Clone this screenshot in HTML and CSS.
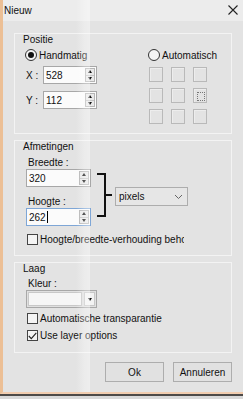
FILE: index.html
```html
<html>
<head>
<title>Nieuw</title>
<link rel="stylesheet" href="styles.css">
</head>
<body>
<div class="frame">
<div class="window">
  <div class="titlebar">
    <span class="title">Nieuw</span>
    <svg class="close" width="10" height="10" viewBox="0 0 10 10"><path d="M0.5 0.5 L9.5 9.5 M9.5 0.5 L0.5 9.5" stroke="#222" stroke-width="1.1" fill="none"/></svg>
  </div>

  <div class="content">
    <!-- Positie -->
    <div class="group positie">
      <div class="group-label">Positie</div>
      <div class="pos-cols">
        <div class="pos-manual">
          <div class="radio-row"><span class="radio checked"></span>Handmatig</div>
          <div class="coord-row">
            <span class="coord-label">X :</span>
            <div class="spin">
              <span class="spin-value">528</span>
              <div class="spin-btns"><span class="up"></span><span class="down"></span></div>
            </div>
          </div>
          <div class="coord-row second">
            <span class="coord-label">Y :</span>
            <div class="spin">
              <span class="spin-value">112</span>
              <div class="spin-btns"><span class="up"></span><span class="down"></span></div>
            </div>
          </div>
        </div>
        <div class="pos-auto">
          <div class="radio-row"><span class="radio"></span>Automatisch</div>
          <div class="anchor-grid">
            <span class="cell"></span><span class="cell"></span><span class="cell"></span>
            <span class="cell"></span><span class="cell"></span><span class="cell selected"></span>
            <span class="cell"></span><span class="cell"></span><span class="cell"></span>
          </div>
        </div>
      </div>
    </div>

    <!-- Afmetingen -->
    <div class="group afmetingen">
      <div class="group-label">Afmetingen</div>
      <div class="size-row">
        <div class="size-fields">
          <div class="field-label">Breedte :</div>
          <div class="spin wide">
            <span class="spin-value">320</span>
            <div class="spin-btns"><span class="up"></span><span class="down"></span></div>
          </div>
          <div class="field-label second">Hoogte :</div>
          <div class="spin wide focused">
            <span class="spin-value">262<span class="caret"></span></span>
            <div class="spin-btns"><span class="up"></span><span class="down"></span></div>
          </div>
        </div>
        <svg class="bracket" width="15" height="44" viewBox="0 0 15 44"><path d="M0 1 H8 V43 H0 M8 22 H15" stroke="#111" stroke-width="2" fill="none"/></svg>
        <div class="unit-select">
          <span>pixels</span>
          <svg width="9" height="6" viewBox="0 0 9 6"><path d="M1 1 L4.5 4.5 L8 1" stroke="#666" stroke-width="1" fill="none"/></svg>
        </div>
      </div>
      <div class="check-row clipped"><span class="check"></span>Hoogte/breedte-verhouding behouden</div>
    </div>

    <!-- Laag -->
    <div class="group laag">
      <div class="group-label">Laag</div>
      <div class="field-label">Kleur :</div>
      <div class="color-combo">
        <span class="color-field"></span>
        <span class="color-btn"><span class="tri"></span></span>
      </div>
      <div class="check-row first"><span class="check"></span>Automatische transparantie</div>
      <div class="check-row"><span class="check on"><svg width="9" height="8" viewBox="0 0 9 8"><path d="M0.8 4 L3.3 6.6 L8.3 0.8" stroke="#222" stroke-width="1.1" fill="none"/></svg></span>Use layer options</div>
    </div>

    <div class="buttons">
      <button class="btn">Ok</button>
      <button class="btn">Annuleren</button>
    </div>
  </div>

  <div class="glare"></div>
</div>
</div>
</body>
</html>
```

FILE: styles.css
```css
* {
  box-sizing: border-box;
}

body {
  margin: 0;
  background: #d9d9d9;
  font-family: "Liberation Sans", Arial, sans-serif;
  font-size: 10px;
  color: #111;
}

.frame {
  width: 243px;
  height: 396px;
  border-bottom: 2px solid #4d4a48;
}

.window {
  position: relative;
  height: 394px;
  background: #e3e3e3;
  border-left: 3px solid #ecbf95;
  border-bottom: 2px solid #f1cdb0;
  overflow: hidden;
}

.titlebar {
  height: 21px;
  background: #ececec;
  display: flex;
  align-items: center;
  justify-content: space-between;
  padding: 0 5px 0 1px;
}

.close {
  margin-top: -1px;
}

.content {
  padding: 12px 11px 0 11px;
}

.group {
  border: 1px solid #f3f3f3;
  padding-left: 8px;
}

.group-label {
  line-height: 12px;
  margin-top: 0;
}

/* Positie */
.positie {
  height: 101px;
}

.pos-cols {
  display: flex;
  padding-left: 2px;
}

.pos-manual {
  width: 123px;
}

.radio-row {
  display: flex;
  align-items: center;
  height: 14px;
  margin-top: 2px;
}

.radio {
  width: 12px;
  height: 12px;
  border-radius: 50%;
  border: 1px solid #333;
  background: #f4f4f4;
  margin-right: 2px;
  position: relative;
}

.radio.checked::after {
  content: "";
  position: absolute;
  left: 2px;
  top: 2px;
  width: 6px;
  height: 6px;
  border-radius: 50%;
  background: #111;
}

.coord-row {
  display: flex;
  align-items: center;
  margin-top: 4px;
}

.coord-row.second {
  margin-top: 7px;
}

.coord-label {
  width: 18px;
  padding-left: 1px;
}

.spin {
  width: 54px;
  height: 18px;
  border: 1px solid #a7a7a7;
  background: #fbfbfb;
  display: flex;
  align-items: center;
  justify-content: space-between;
  padding: 1px 1px 1px 2px;
}

.spin.wide {
  width: 65px;
  margin-left: -2px;
}

.spin.focused {
  border-color: #7ea6d6;
}

.spin-value {
  display: flex;
  align-items: center;
}

.caret {
  width: 1px;
  height: 12px;
  background: #000;
  margin-left: 1px;
}

.spin-btns {
  width: 10px;
  height: 14px;
  display: flex;
  flex-direction: column;
  border: 1px solid #b5b5b5;
  background: #e9e9e9;
}

.spin-btns span {
  flex: 1;
  display: flex;
  align-items: center;
  justify-content: center;
}

.spin-btns .up {
  border-bottom: 1px solid #c4c4c4;
}

.spin-btns .up::after {
  content: "";
  border-left: 2px solid transparent;
  border-right: 2px solid transparent;
  border-bottom: 3px solid #111;
}

.spin-btns .down::after {
  content: "";
  border-left: 2px solid transparent;
  border-right: 2px solid transparent;
  border-top: 3px solid #111;
}

.anchor-grid {
  display: grid;
  grid-template-columns: repeat(3, 14px);
  grid-auto-rows: 15px;
  column-gap: 8px;
  row-gap: 6px;
  margin-top: 5px;
  margin-left: 1px;
}

.cell {
  border: 1px solid #b9b9b9;
  box-shadow: inset 1px 1px 0 #ededed;
}

.cell.selected {
  padding: 3px;
}

.cell.selected::after {
  content: "";
  display: block;
  width: 100%;
  height: 100%;
  border: 1px dotted #777;
}

/* Afmetingen */
.afmetingen {
  height: 116px;
  margin-top: 6px;
}

.size-row {
  display: flex;
  align-items: flex-start;
  padding-left: 5px;
}

.size-fields {
  width: 67px;
}

.field-label {
  line-height: 12px;
  margin-top: 4px;
  padding-left: 5px;
}

.size-fields .field-label {
  padding-left: 0;
}

.field-label.second {
  margin-top: 9px;
}

.bracket {
  margin-top: 20px;
  margin-left: 2px;
}

.unit-select {
  width: 73px;
  height: 19px;
  margin-top: 34px;
  margin-left: 3px;
  border: 1px solid #adadad;
  background: #e6e6e6;
  display: flex;
  align-items: center;
  justify-content: space-between;
  padding: 0 4px 0 3px;
}

.check-row {
  display: flex;
  align-items: center;
  height: 13px;
  margin-top: 8px;
  padding-left: 4px;
  white-space: nowrap;
  overflow: hidden;
}

.check-row.clipped {
  width: 161px;
  margin-top: 7px;
}

.check {
  flex: none;
  width: 11px;
  height: 11px;
  border: 1px solid #444;
  background: #f4f4f4;
  margin-right: 2px;
  display: flex;
  align-items: center;
  justify-content: center;
}

/* Laag */
.laag {
  height: 91px;
  margin-top: 6px;
}

.laag .field-label {
  margin-top: 3px;
}

.color-combo {
  width: 71px;
  height: 18px;
  margin-left: 3px;
  border: 1px solid #a8a8a8;
  background: #e0e0e0;
  display: flex;
  align-items: stretch;
  padding: 1px;
  gap: 2px;
}

.color-field {
  flex: 1;
  background: #f6f6f6;
  border: 1px solid #c8c8c8;
}

.color-btn {
  width: 11px;
  background: #f3f3f3;
  border: 1px solid #c8c8c8;
  display: flex;
  align-items: center;
  justify-content: center;
}

.tri {
  border-left: 2px solid transparent;
  border-right: 2px solid transparent;
  border-top: 3px solid #111;
}

.laag .check-row.first {
  margin-top: 4px;
}

.laag .check-row {
  margin-top: 4px;
}

/* buttons */
.buttons {
  display: flex;
  justify-content: flex-end;
  gap: 9px;
  margin-top: 9px;
}

.btn {
  width: 59px;
  height: 20px;
  border: 1px solid #adadad;
  background: #e1e1e1;
  font-family: "Liberation Sans", Arial, sans-serif;
  font-size: 10px;
  color: #111;
  padding: 0;
}

.glare {
  position: absolute;
  top: 0;
  bottom: 0;
  left: 73px;
  width: 14px;
  background: linear-gradient(to right, rgba(255,255,255,0), rgba(255,255,255,0.3) 60%, rgba(255,255,255,0.4));
  pointer-events: none;
}
```
